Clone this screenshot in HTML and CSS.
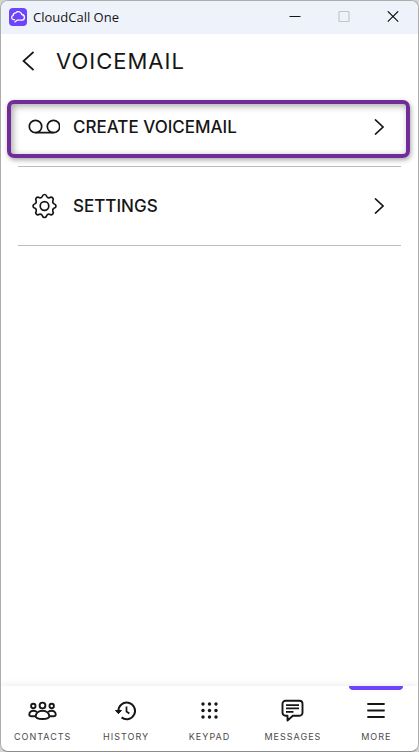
FILE: index.html
```html
<!DOCTYPE html>
<html lang="en">
<head>
<meta charset="utf-8">
<meta name="viewport" content="width=device-width, initial-scale=1">
<title>CloudCall One</title>
<link rel="stylesheet" href="styles.css">
</head>
<body>
<div class="window">
  <header class="titlebar">
    <svg class="app-icon" viewBox="0 0 18 18" aria-hidden="true"><rect width="18" height="18" rx="4" fill="#6a45fb"/><path d="M5.500 11.700H4.600a2.200 2.200 0 0 1-.3-4.300 2.300 2.300 0 0 1 2.500-2.600 3.600 3.600 0 0 1 6.100 1.700 2.900 2.900 0 0 1 .3 5.700H8.100L5.800 13.900" fill="none" stroke="#fff" stroke-width="1.300" stroke-linejoin="round" stroke-linecap="round"/></svg>
    <span class="app-name">CloudCall One</span>
    <button class="caption" aria-label="Minimize"><svg viewBox="0 0 12 12"><path d="M.5 5.500h11"/></svg></button>
    <button class="caption" aria-label="Maximize" disabled><svg viewBox="0 0 12 12"><rect x="1" y=".5" width="10" height="10" rx="1"/></svg></button>
    <button class="caption" aria-label="Close"><svg viewBox="0 0 12 12"><path d="M.8.300l10.400 10.400M11.200.300L.8 10.700"/></svg></button>
  </header>
  <div class="page-head">
    <button class="back" aria-label="Back"><svg viewBox="0 0 12 20"><path d="M11.500 1L1.500 10l10 9"/></svg></button>
    <h1>VOICEMAIL</h1>
  </div>
  <main>
    <ul class="menu">
      <li class="item highlighted">
        <a href="#create">
          <svg class="item-icon" viewBox="0 0 32 26"><circle cx="7.500" cy="12.500" r="6.200"/><circle cx="25.500" cy="12.500" r="6.200"/><path d="M7.500 18.700h18"/></svg>
          <span>CREATE VOICEMAIL</span>
          <svg class="chevron" viewBox="0 0 10 16"><path d="M1 .500l8 7.500-8 7.500"/></svg>
        </a>
      </li>
      <li class="item">
        <a href="#settings">
          <svg class="item-icon" viewBox="0 0 32 26"><circle cx="16.500" cy="13" r="4.300"/><path d="M14.200 3.600C15 .8 18 .8 18.800 3.600Q19.700 5.200 21.500 4.700C24.100 3.300 26.200 5.400 24.800 8Q24.300 9.800 25.900 10.700C28.700 11.500 28.700 14.500 25.900 15.300Q24.300 16.200 24.800 18C26.200 20.600 24.100 22.700 21.500 21.300Q19.700 20.800 18.800 22.400C18 25.200 15 25.200 14.200 22.400Q13.300 20.800 11.500 21.300C8.900 22.700 6.800 20.600 8.200 18Q8.700 16.200 7.100 15.300C4.300 14.500 4.300 11.500 7.100 10.700Q8.700 9.800 8.200 8C6.800 5.400 8.900 3.300 11.500 4.700Q13.300 5.200 14.200 3.600z"/></svg>
          <span>SETTINGS</span>
          <svg class="chevron" viewBox="0 0 10 16"><path d="M1 .500l8 7.500-8 7.500"/></svg>
        </a>
      </li>
    </ul>
  </main>
  <nav class="tabs">
    <a class="tab" href="#contacts">
      <svg viewBox="0 0 30 26"><g stroke-width="1.900"><circle cx="14.500" cy="7.500" r="2.900"/><circle cx="5.300" cy="8" r="2.200"/><circle cx="23.700" cy="8" r="2.200"/><path d="M14.500 12.700c-4 0-6.800 2.600-6.800 5.600 0 2 2.600 2.700 6.800 2.700s6.800-.7 6.800-2.700c0-3-2.800-5.600-6.800-5.600z"/><path d="M7.500 18.200H3.500c-1.600 0-2.200-.6-2.200-1.800 0-2 1.900-3.700 4.200-3.700 1.500 0 2.600.5 3.400 1.500M21.500 18.200h4c1.600 0 2.200-.6 2.200-1.800 0-2-1.900-3.700-4.200-3.700-1.500 0-2.600.5-3.400 1.500"/></g></svg>
      CONTACTS
    </a>
    <a class="tab" href="#history">
      <svg viewBox="0 0 30 26"><path d="M7.400 13a8.300 8.300 0 1 1 3.200 6.400" stroke-width="2"/><path d="M15.500 8.500v5l2.800 2"/><path d="M4.500 12.500h6L7.400 15.700z" fill="currentColor" stroke-width="1"/></svg>
      HISTORY
    </a>
    <a class="tab" href="#keypad">
      <svg viewBox="0 0 30 26"><g fill="currentColor" stroke="none"><circle cx="9" cy="6" r="1.700"/><circle cx="15.500" cy="6" r="1.700"/><circle cx="22" cy="6" r="1.700"/><circle cx="9" cy="12.500" r="1.700"/><circle cx="15.500" cy="12.500" r="1.700"/><circle cx="22" cy="12.500" r="1.700"/><circle cx="9" cy="19" r="1.700"/><circle cx="15.500" cy="19" r="1.700"/><circle cx="22" cy="19" r="1.700"/></g></svg>
      KEYPAD
    </a>
    <a class="tab" href="#messages">
      <svg viewBox="0 0 30 26"><path d="M8 2.800h13.500a3 3 0 0 1 3 3v8.900a3 3 0 0 1-3 3h-6.700L9.500 22.600V17.700H7.500a3 3 0 0 1-3-3V5.800a3 3 0 0 1 3-3z" stroke-width="1.900" stroke-linejoin="round"/><path d="M8 7.200h13M8 10.400h13M8 13.900h7.500"/></svg>
      MESSAGES
    </a>
    <a class="tab active" href="#more" aria-current="page">
      <svg viewBox="0 0 30 26"><path d="M7 6h16M7 12.500h16M7 19h16" stroke-width="1.800" stroke-linecap="round"/></svg>
      MORE
    </a>
  </nav>
</div>
</body>
</html>
```
FILE: styles.css
```css
* {
  box-sizing: border-box;
}

body {
  margin: 0;
  background: #d4d4d4;
  color: #161616;
  font-family: Inter, "Liberation Sans", sans-serif;
}

.window {
  display: flex;
  flex-direction: column;
  min-height: 100vh;
  border: 1px solid #adadad;
  border-bottom-color: #8c8c8c;
  border-radius: 8px;
  overflow: hidden;
  background: #fff;
}

svg {
  display: block;
  fill: none;
  stroke: currentColor;
  stroke-width: 1.7;
}

button {
  padding: 0;
  border: 0;
  background: none;
  color: inherit;
}

a {
  color: inherit;
  text-decoration: none;
}

.titlebar {
  display: flex;
  align-items: center;
  height: 33px;
  padding: 0 1px 2px 8px;
  background: #eef2fa;
}

.app-icon {
  width: 18px;
  height: 18px;
  stroke: none;
}

.app-name {
  flex: 1;
  margin-left: 6px;
  font: 13px "Open Sans", "Noto Sans", sans-serif;
}

.caption {
  display: grid;
  place-items: center;
  width: 49px;
  height: 31px;
}

.caption svg {
  width: 12px;
  height: 12px;
  stroke-width: 1.2;
}

.caption:disabled {
  color: #c4c6ca;
}

.page-head {
  display: flex;
  align-items: center;
  gap: 22px;
  height: 54px;
  padding-left: 21px;
}

.back svg {
  width: 12px;
  height: 20px;
}

h1 {
  margin: 0;
  font-size: 22px;
  font-weight: 400;
  letter-spacing: 1px;
}

main {
  flex: 1;
}

.menu {
  margin: 0;
  padding: 0 17px;
  list-style: none;
}

.item {
  position: relative;
  border-bottom: 1px solid #bcbcbc;
}

.item a {
  display: flex;
  align-items: center;
  gap: 13px;
  height: 78px;
  padding: 0 17px 0 10px;
  font-size: 17px;
  font-weight: 450;
}

.item span {
  flex: 1;
}

.item-icon {
  width: 32px;
  height: 26px;
}

.chevron {
  width: 10px;
  height: 16px;
}

.highlighted::after {
  content: "";
  position: absolute;
  inset: 12px -9px 8px -11px;
  border: 4px solid #702c98;
  border-radius: 7px;
  box-shadow: 1px 2px 5px rgb(0 0 0 / 35%), inset 2px 2px 7px rgb(0 0 0 / 35%);
  pointer-events: none;
}

.tabs {
  display: grid;
  grid-template-columns: repeat(5, 1fr);
  height: 65px;
  box-shadow: 0 -1px 8px rgb(0 0 0 / 8%);
}

.tab {
  position: relative;
  display: flex;
  flex-direction: column;
  align-items: center;
  gap: 7px;
  padding-top: 12px;
  color: #4a4a4a;
  font-size: 9px;
  line-height: 12px;
  letter-spacing: 1px;
}

.tab svg {
  width: 30px;
  height: 26px;
  color: #161616;
}

.active::before {
  content: "";
  position: absolute;
  top: 0;
  width: 54px;
  height: 4px;
  border-radius: 0 0 4px 4px;
  background: #6a45fb;
}
```
